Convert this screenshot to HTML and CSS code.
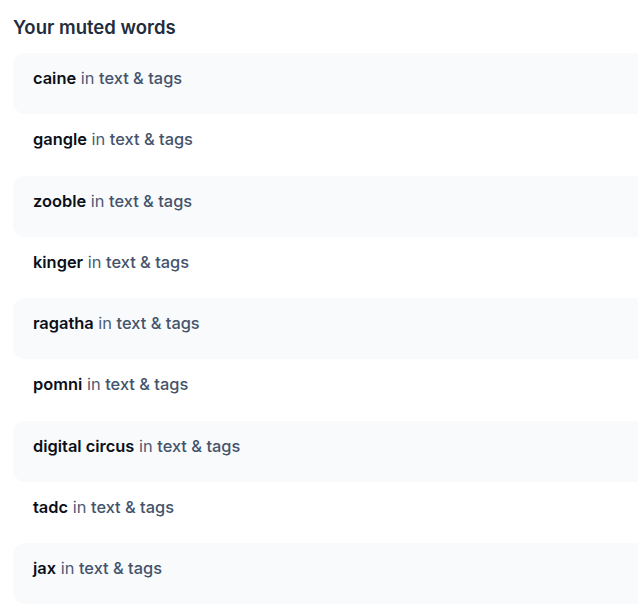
FILE: index.html
```html
<!DOCTYPE html>
<html>
<head>
<meta charset="utf-8">
<link rel="stylesheet" href="styles.css">
</head>
<body>
<div class="page">
  <h2 class="title">Your muted words</h2>
  <ul class="list">
    <li class="row shade"><span class="word">caine</span> <span class="in">in</span> <span class="scope">text &amp; tags</span></li>
    <li class="row"><span class="word">gangle</span> <span class="in">in</span> <span class="scope">text &amp; tags</span></li>
    <li class="row shade"><span class="word">zooble</span> <span class="in">in</span> <span class="scope">text &amp; tags</span></li>
    <li class="row"><span class="word">kinger</span> <span class="in">in</span> <span class="scope">text &amp; tags</span></li>
    <li class="row shade"><span class="word">ragatha</span> <span class="in">in</span> <span class="scope">text &amp; tags</span></li>
    <li class="row"><span class="word">pomni</span> <span class="in">in</span> <span class="scope">text &amp; tags</span></li>
    <li class="row shade"><span class="word">digital circus</span> <span class="in">in</span> <span class="scope">text &amp; tags</span></li>
    <li class="row"><span class="word">tadc</span> <span class="in">in</span> <span class="scope">text &amp; tags</span></li>
    <li class="row shade"><span class="word">jax</span> <span class="in">in</span> <span class="scope">text &amp; tags</span></li>
  </ul>
</div>
</body>
</html>
```
FILE: styles.css
```css
html, body {
  margin: 0;
  padding: 0;
  background: #ffffff;
  overflow: hidden;
}
body {
  font-family: Inter, "Noto Sans", sans-serif;
}
.page {
  padding: 16px 0 0 13px;
}
.title {
  margin: 0 0 15px 0;
  font-size: 18.5px;
  line-height: 22px;
  font-weight: 600;
  color: #222c3c;
}
.list {
  list-style: none;
  margin: 0;
  padding: 0;
  width: 680px;
}
.row {
  display: block;
  height: 61.25px;
  box-sizing: border-box;
  padding: 14px 20px 0 20px;
  font-size: 16.4px;
  line-height: 22px;
  border-radius: 12px;
}
.shade {
  background: #f8fafc;
}
.word {
  font-weight: 600;
  color: #0b0f19;
}
.in {
  font-weight: 400;
  color: #4b5b73;
}
.scope {
  font-weight: 500;
  color: #44536b;
}
```
